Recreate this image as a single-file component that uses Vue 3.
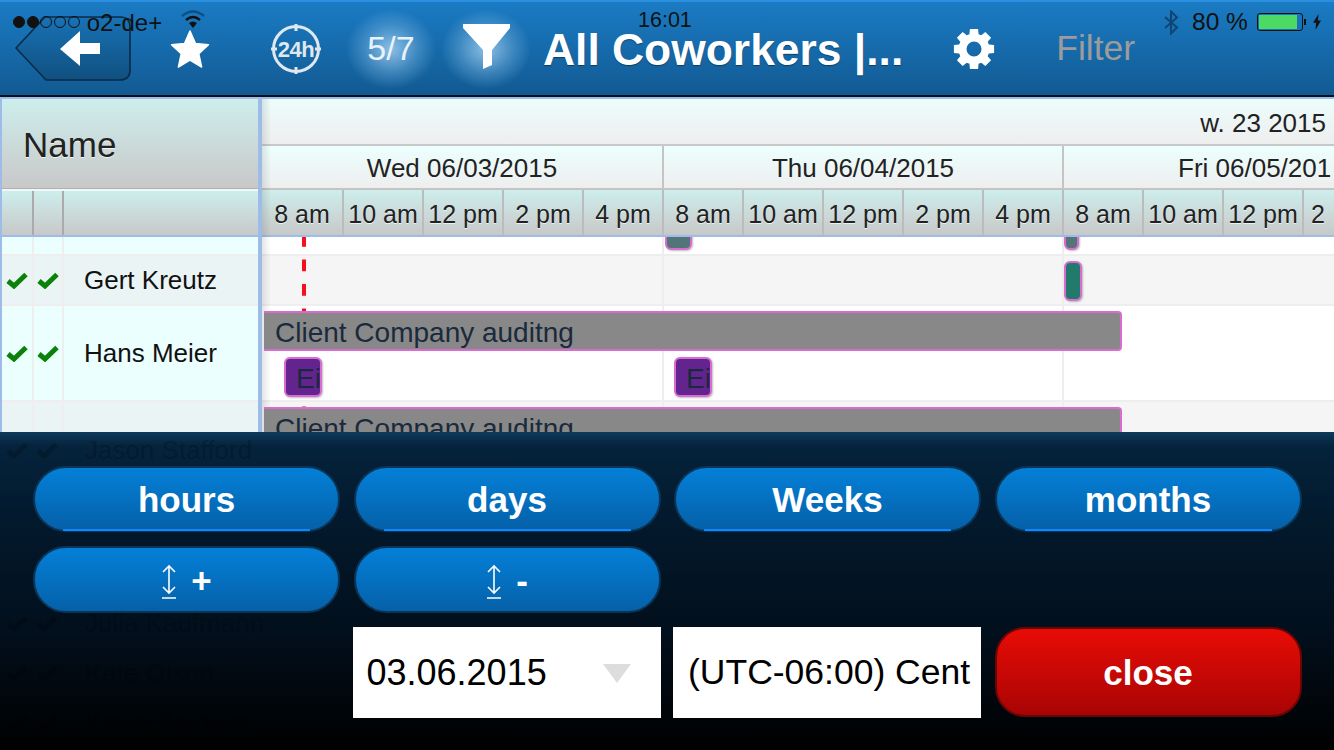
<template>
  <div class="screen">
    <header class="topbar">
      <svg class="back" width="116" height="66" viewBox="0 0 116 66">
        <defs>
          <linearGradient id="backFill" x1="0" y1="0" x2="0" y2="1">
            <stop offset="0" stop-color="#1872b6" />
            <stop offset="1" stop-color="#10507f" />
          </linearGradient>
        </defs>
        <path d="M1 32 L30 1 H105 Q115 1 115 11 V54 Q115 64 105 64 H31 Z" fill="url(#backFill)" stroke="#0b2a45" stroke-width="1.6" stroke-linejoin="round" />
        <path d="M45 33 L65 15 V27 H85 V38 H65 V50 Z" fill="#fff" />
      </svg>
      <svg class="star" width="40" height="40" viewBox="0 0 40 40">
        <path d="M20 2 L25.5 14.5 L38.5 15.8 L28.8 24.8 L31.6 38 L20 31.2 L8.4 38 L11.2 24.8 L1.5 15.8 L14.5 14.5 Z" fill="#fff" stroke="#fff" stroke-width="1.5" stroke-linejoin="round" />
      </svg>
      <svg class="clock" width="50" height="50" viewBox="0 0 50 50">
        <circle cx="25" cy="25" r="22.5" fill="none" stroke="#dfe8ee" stroke-width="3" />
        <path d="M25 0 V7 M25 43 V50 M0 25 H6 M44 25 H50" stroke="#dfe8ee" stroke-width="3" />
        <text x="25" y="33" text-anchor="middle" class="clock-text">24h</text>
      </svg>
      <div class="halo count">5/7</div>
      <div class="halo funnel">
        <svg width="48" height="45" viewBox="0 0 48 45">
          <path d="M0 0 H47 V4 L29 26 V41 L20 45 V26 L0 4 Z" fill="#fff" />
        </svg>
      </div>
      <div class="title">All Coworkers |...</div>
      <svg class="gear" width="42" height="42" viewBox="-21 -21 42 42">
        <path :d="gearPath" fill="#fff" fill-rule="evenodd" />
      </svg>
      <div class="filter-link">Filter</div>
    </header>

    <div class="status">
      <div class="status-left">
        <span class="dots">
          <i v-for="n in 5" :key="n" :class="{ on: n < 3 }"></i>
        </span>
        <span>o2-de+</span>
        <svg class="wifi" width="24" height="18" viewBox="0 0 24 18">
          <path d="M1 6 Q12 -3 23 6" fill="none" stroke="#0d4f80" stroke-width="2.4" />
          <path d="M5 10 Q12 4 19 10" fill="none" stroke="#111" stroke-width="2.4" />
          <path d="M8 13 Q12 10 16 13 L12 18 Z" fill="#111" />
        </svg>
      </div>
      <div class="status-time">16:01</div>
      <div class="status-right">
        <svg width="16" height="25" viewBox="0 0 16 24">
          <path d="M2 6.5 L14 17 L8 23 V1 L14 7 L2 17.5" fill="none" stroke="#0e4572" stroke-width="2" />
        </svg>
        <span class="battery-text">80 %</span>
        <span class="battery"><b></b></span>
        <svg class="bolt" width="10" height="16" viewBox="0 0 10 20">
          <path d="M7 0 L0 11 H4 L3 20 L10 8 H6 Z" fill="#111" />
        </svg>
      </div>
    </div>

    <main class="gantt">
      <section class="names">
        <div class="names-title">Name</div>
        <div class="names-sub">
          <span class="c1"></span><span class="c2"></span><span class="c3"></span>
        </div>
        <div
          v-for="(row, i) in rows"
          :key="i"
          class="name-row"
          :class="{ alt: i % 2 === 1 }"
          :style="{ height: row.height + 'px' }"
        >
          <span class="c1"><svg v-if="row.name" class="check" width="22" height="17" viewBox="0 0 22 17"><path d="M2 9 L8 14 L20 2.5" /></svg></span>
          <span class="c2"><svg v-if="row.name" class="check" width="22" height="17" viewBox="0 0 22 17"><path d="M2 9 L8 14 L20 2.5" /></svg></span>
          <span class="c3">{{ row.name }}</span>
        </div>
      </section>

      <section class="timeline">
        <div class="week">w. 23 2015</div>
        <div class="days">
          <div v-for="d in days" :key="d" class="day">{{ d }}</div>
        </div>
        <div class="hours">
          <div v-for="(h, i) in hours" :key="i" class="hour">{{ h }}</div>
        </div>
        <div
          v-for="(row, i) in rows"
          :key="i"
          class="lane"
          :class="{ alt: i % 2 === 1 }"
          :style="{ height: row.height + 'px' }"
        >
          <i class="grid-line" style="left: 400px"></i>
          <i class="grid-line" style="left: 800px"></i>
          <div
            v-for="(ev, j) in row.events"
            :key="j"
            class="event"
            :class="ev.kind"
            :style="{ left: ev.x + 'px', top: ev.y + 'px', width: ev.w + 'px', height: ev.h + 'px', background: ev.color }"
          >{{ ev.text }}</div>
        </div>
        <div class="today"></div>
      </section>
    </main>

    <section class="panel">
      <div class="ghost">
        <div v-for="(g, i) in ghosts" :key="i" class="ghost-row" :style="{ height: g.height + 'px' }">
          <template v-if="g.name">
            <svg class="check" width="22" height="17" viewBox="0 0 22 17"><path d="M2 9 L8 14 L20 2.5" /></svg>
            <svg class="check" width="22" height="17" viewBox="0 0 22 17"><path d="M2 9 L8 14 L20 2.5" /></svg>
            <span>{{ g.name }}</span>
          </template>
        </div>
      </div>
      <div class="controls">
        <button class="btn lined">hours</button>
        <button class="btn lined">days</button>
        <button class="btn lined">Weeks</button>
        <button class="btn lined">months</button>
        <button class="btn">
          <svg class="updown" width="16" height="36" viewBox="0 0 16 36">
            <path d="M8 2 V29 M2 8 L8 2 L14 8 M2 23 L8 29 L14 23 M1 34 H15" fill="none" stroke="#fff" stroke-width="1.6" />
          </svg>
          <span>+</span>
        </button>
        <button class="btn">
          <svg class="updown" width="16" height="36" viewBox="0 0 16 36">
            <path d="M8 2 V29 M2 8 L8 2 L14 8 M2 23 L8 29 L14 23 M1 34 H15" fill="none" stroke="#fff" stroke-width="1.6" />
          </svg>
          <span>-</span>
        </button>
        <div class="spacer"></div>
        <div class="spacer"></div>
        <div class="spacer"></div>
        <div class="select">
          <span>03.06.2015</span>
          <i class="caret"></i>
        </div>
        <div class="select tz"><span>(UTC-06:00) Cent</span></div>
        <button class="btn close">close</button>
      </div>
    </section>
  </div>
</template>

<script setup>
const days = ['Wed 06/03/2015', 'Thu 06/04/2015', 'Fri 06/05/201']
const hours = ['8 am', '10 am', '12 pm', '2 pm', '4 pm', '8 am', '10 am', '12 pm', '2 pm', '4 pm', '8 am', '10 am', '12 pm', '2']

const AUDIT = 'Client Company auditng'

const rows = [
  {
    name: '',
    height: 17,
    events: [
      { kind: 'small', x: 403, y: -26, w: 27, h: 39, color: '#52757a', text: '' },
      { kind: 'small', x: 802, y: -26, w: 15, h: 39, color: '#52757a', text: '' }
    ]
  },
  {
    name: 'Gert Kreutz',
    height: 48,
    events: [{ kind: 'small', x: 802, y: 5, w: 18, h: 40, color: '#217a6c', text: '' }]
  },
  {
    name: 'Hans Meier',
    height: 94,
    events: [
      { kind: 'bar', x: 2, y: 5, w: 858, h: 40, color: '#888888', text: AUDIT },
      { kind: 'small', x: 22, y: 51, w: 38, h: 40, color: '#63248f', text: 'Ei' },
      { kind: 'small', x: 412, y: 51, w: 38, h: 40, color: '#63248f', text: 'Ei' }
    ]
  },
  {
    name: '',
    height: 96,
    events: [{ kind: 'bar', x: 2, y: 5, w: 858, h: 40, color: '#888888', text: AUDIT }]
  }
]

const ghosts = [
  { name: 'Jason Stafford', height: 96 },
  { name: '', height: 100 },
  { name: 'Julia Kaufmann', height: 50 },
  { name: 'Kate Olson', height: 50 },
  { name: 'Kevin Baldwin', height: 50 }
]

// 8 tooth gear with a round hole
function makeGear() {
  const pts = []
  for (let i = 0; i < 8; i++) {
    const a = (i * Math.PI) / 4
    const step = [
      [-0.3, 15.5],
      [-0.2, 20.5],
      [0.2, 20.5],
      [0.3, 15.5]
    ]
    for (const [da, r] of step) {
      pts.push(`${(Math.sin(a + da) * r).toFixed(2)} ${(-Math.cos(a + da) * r).toFixed(2)}`)
    }
  }
  return `M${pts.join(' L')} Z M7.5 0 A7.5 7.5 0 1 0 -7.5 0 A7.5 7.5 0 1 0 7.5 0 Z`
}
const gearPath = makeGear()
</script>

<style>
html,
body {
  margin: 0;
  background: #000;
}
</style>

<style scoped>
.screen {
  position: relative;
  width: 1334px;
  height: 750px;
  overflow: hidden;
  font-family: "Liberation Sans", Arial, sans-serif;
  background: #fff;
}

/* top bar */
.topbar {
  box-sizing: border-box;
  height: 97px;
  display: flex;
  align-items: center;
  padding-left: 15px;
  color: #fff;
  background: linear-gradient(#1a7bc4, #125a92);
  border-top: 2px solid #2b8fe0;
  border-bottom: 2px solid #05101a;
}
.back { flex: none; }
.star { flex: none; margin-left: 39px; }
.clock { flex: none; margin-left: 61px; }
.clock-text {
  font: bold 22px "Liberation Sans", Arial, sans-serif;
  letter-spacing: -0.5px;
  fill: #dfe8ee;
}
.halo {
  flex: none;
  width: 90px;
  height: 80px;
  display: flex;
  align-items: center;
  justify-content: center;
  background: radial-gradient(closest-side, rgba(160, 205, 238, 0.85), rgba(120, 180, 225, 0.4) 60%, rgba(120, 180, 225, 0));
}
.count {
  margin-left: 25px;
  font-size: 34px;
  color: #e8f2fa;
}
.funnel { margin-left: 5px; }
.funnel svg { margin-left: 2px; margin-top: -5px; }
.title {
  flex: none;
  margin-left: 12px;
  margin-top: 2px;
  font-size: 44.4px;
  font-weight: bold;
  white-space: nowrap;
  text-shadow: 0 1px 1px rgba(0, 0, 0, 0.4);
}
.gear { flex: none; margin-left: 50px; }
.filter-link {
  flex: none;
  margin-left: 61px;
  font-size: 35.5px;
  color: #9c9c9c;
}

/* phone status bar lies over the top bar */
.status {
  position: absolute;
  left: 0;
  top: 0;
  width: 1334px;
  height: 40px;
  font-size: 24px;
  color: #111;
}
.status-left {
  position: absolute;
  left: 13px;
  top: 9px;
  display: flex;
  align-items: center;
  gap: 7px;
}
.dots { display: flex; gap: 1.7px; margin-top: -3px; }
.dots i {
  box-sizing: border-box;
  width: 12px;
  height: 12px;
  border: 1px solid #111;
  border-radius: 50%;
}
.dots i.on { background: #111; }
.wifi { margin-left: 12px; margin-top: -8px; }
.status-time {
  position: absolute;
  left: 638px;
  top: 8px;
  font-size: 21.5px;
}
.status-right {
  position: absolute;
  left: 1163px;
  top: 8px;
  display: flex;
  align-items: center;
  gap: 6px;
}
.battery-text { margin-left: 7px; margin-right: 3px; font-size: 24.5px; }
.battery {
  position: relative;
  box-sizing: border-box;
  width: 46px;
  height: 18px;
  border: 1px solid #111;
  border-radius: 3px;
  padding: 1px;
}
.battery::after {
  content: "";
  position: absolute;
  right: -4px;
  top: 5px;
  width: 2px;
  height: 6px;
  background: #111;
}
.battery b {
  display: block;
  width: 38px;
  height: 14px;
  background: #4cd964;
}
.bolt { margin-left: 3px; }

/* gantt */
.gantt {
  display: flex;
  height: 653px;
  background: #9dbde8;
  padding-top: 2px;
  box-sizing: border-box;
}
.names {
  flex: none;
  box-sizing: border-box;
  width: 262px;
  padding-left: 2px;
  padding-right: 4px;
  background: #9dbde8;
}
.names-title {
  box-sizing: border-box;
  height: 90px;
  padding-left: 21px;
  padding-top: 2px;
  display: flex;
  align-items: center;
  font-size: 35px;
  color: #222;
  text-shadow: 0 1px 0 rgba(255, 255, 255, 0.7);
  background: linear-gradient(#cdeeec, #c8c8c8);
  border-bottom: 1px solid #b0b0b0;
}
.names-sub {
  box-sizing: border-box;
  height: 48px;
  display: flex;
  border-top: 2px solid #eef8f8;
  border-bottom: 2px solid #9dbde8;
  background: linear-gradient(#cdeeec, #c8c8c8);
}
.c1 { flex: none; width: 32px; }
.c2 { flex: none; width: 30px; }
.c3 { flex: 1; }
.names-sub .c1,
.names-sub .c2 { border-right: 2px solid #aaa; box-sizing: border-box; }
.name-row {
  box-sizing: content-box;
  display: flex;
  background: #ebffff;
  border-bottom: 2px solid #eeeeee;
  font-size: 26px;
  color: #111;
}
.name-row.alt { background: #ebf4f4; }
.name-row .c1,
.name-row .c2 {
  box-sizing: border-box;
  border-right: 2px solid #eeeeee;
  display: flex;
  align-items: center;
  justify-content: center;
}
.name-row .c3 {
  display: flex;
  align-items: center;
  padding-left: 20px;
}
.check { flex: none; }
.check path {
  fill: none;
  stroke: #0a820a;
  stroke-width: 5;
}

.timeline {
  position: relative;
  flex: 1;
  min-width: 0;
  overflow: hidden;
  background: #fff;
}
.timeline::after {
  content: "";
  position: absolute;
  left: 0;
  top: 0;
  bottom: 0;
  width: 9px;
  background: linear-gradient(90deg, rgba(0, 0, 0, 0.1), rgba(0, 0, 0, 0));
}
.week {
  box-sizing: border-box;
  height: 47px;
  padding: 9px 8px 0 0;
  text-align: right;
  font-size: 26px;
  line-height: 30px;
  color: #222;
  background: linear-gradient(#ecfdfc, #eeeeee);
  border-bottom: 2px solid #c8c8c8;
}
.days {
  display: flex;
  height: 44px;
  box-sizing: border-box;
  border-bottom: 2px solid #c4c4c4;
}
.day {
  flex: none;
  box-sizing: border-box;
  width: 400px;
  text-align: center;
  font-size: 26px;
  line-height: 44px;
  color: #222;
  white-space: nowrap;
  background: linear-gradient(#ecfffe, #eeeeee);
  border-right: 2px solid #c4c4c4;
}
.day:first-child { width: 402px; }
.day:last-child {
  flex: 1;
  width: auto;
  padding-left: 114px;
  text-align: left;
  border-right: 0;
}
.hours {
  display: flex;
  height: 47px;
  box-sizing: border-box;
  border-bottom: 2px solid #9dbde8;
}
.hour {
  flex: none;
  box-sizing: border-box;
  width: 80px;
  text-align: center;
  font-size: 25px;
  line-height: 48px;
  color: #222;
  white-space: nowrap;
  text-shadow: 0 1px 0 rgba(255, 255, 255, 0.7);
  background: linear-gradient(#cdeeec, #c8c8c8);
  border-right: 2px solid #bcbcbc;
}
.hour:first-child { width: 82px; }
.hour:last-child {
  flex: 1;
  width: auto;
  border-right: 0;
  text-align: left;
  padding-left: 7px;
}
.lane {
  position: relative;
  overflow: hidden;
  background: #fff;
  border-bottom: 2px solid #eeeeee;
}
.lane.alt { background: #f5f5f5; }
.grid-line {
  position: absolute;
  top: 0;
  bottom: 0;
  width: 2px;
  background: #eeeeee;
}
.event {
  position: absolute;
  box-sizing: border-box;
  overflow: hidden;
  white-space: nowrap;
  font-size: 28px;
  line-height: 40px;
  color: #1a2a3c;
  border: 2px solid #d86cd0;
  z-index: 2;
}
.event.bar {
  padding-left: 11px;
  border-left: 0;
  border-radius: 0 4px 4px 0;
}
.event.small {
  padding-left: 10px;
  border-radius: 6px;
  box-shadow: 1px 1px 2px rgba(0, 0, 0, 0.25);
}
.today {
  position: absolute;
  left: 40px;
  top: 138px;
  width: 4px;
  height: 200px;
  z-index: 1;
  background: linear-gradient(#f5101c 50%, transparent 50%) 0 -2px / 100% 24.5px;
}

/* bottom sheet lies over the chart */
.panel {
  position: absolute;
  left: 0;
  top: 432px;
  width: 1334px;
  height: 318px;
  overflow: hidden;
  z-index: 5;
  background: linear-gradient(#0e3a5c 0, #05233c 14px, #031a2e 80px, #020f1c 200px, #000 318px);
}
.ghost {
  position: absolute;
  left: 6px;
  top: -30px;
  font-size: 26px;
  color: rgba(0, 0, 0, 0.2);
}
.ghost-row {
  display: flex;
  align-items: center;
  gap: 8px;
}
.ghost-row span { margin-left: 19px; }
.ghost .check path { stroke: rgba(0, 0, 0, 0.2); }
.controls {
  position: relative;
  box-sizing: border-box;
  padding: 34px 33px 0;
  display: grid;
  grid-template-columns: repeat(4, 307px);
  grid-template-rows: 66px 67px 91px;
  gap: 14px 13.5px;
}
.btn {
  position: relative;
  box-sizing: border-box;
  display: flex;
  align-items: center;
  justify-content: center;
  gap: 14px;
  padding: 2px 0 0;
  font-family: inherit;
  font-size: 35px;
  font-weight: bold;
  color: #fff;
  border: 2px solid #0b3557;
  border-radius: 33px;
  background: linear-gradient(#0480d8, #0560a8);
}
.btn.lined::after {
  content: "";
  position: absolute;
  left: 28px;
  right: 28px;
  bottom: -1px;
  height: 2px;
  background: #0a88ff;
}
.updown { flex: none; margin-top: 2px; }
.select {
  box-sizing: border-box;
  margin-left: -1px;
  display: flex;
  align-items: center;
  justify-content: space-between;
  padding: 0 30px 0 14px;
  background: #fff;
  color: #000;
  font-size: 36px;
  white-space: nowrap;
}
.select.tz {
  justify-content: flex-start;
  padding: 0 0 0 15px;
  font-size: 35.5px;
}
.caret {
  flex: none;
  width: 0;
  height: 0;
  border-left: 14px solid transparent;
  border-right: 14px solid transparent;
  border-top: 19px solid #dddddd;
  margin-top: 2px;
}
.btn.close {
  height: 90px;
  border-color: #6a0505;
  border-radius: 30px;
  background: linear-gradient(#e80c06, #a80404);
}
</style>
